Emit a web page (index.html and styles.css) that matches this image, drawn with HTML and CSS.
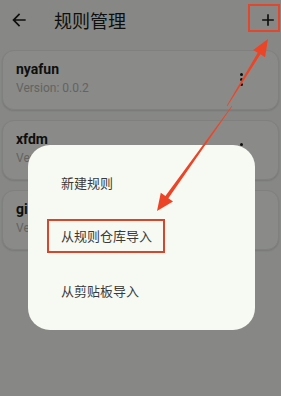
FILE: index.html
```html
<!DOCTYPE html>
<html>
  <head>
    <meta charset="UTF-8" />
    <title>规则管理</title>
    <link rel="stylesheet" href="styles.css">
  </head>
  <body>
    <div class="topbar">
      <svg class="back" viewBox="0 0 24 24"><path d="M20 11H7.83l5.59-5.59L12 4l-8 8 8 8 1.41-1.41L7.83 13H20v-2z"/></svg>
      <h1>规则管理</h1>
      <span class="spacer"></span>
      <svg class="add" viewBox="0 0 24 24"><path d="M19 13h-6v6h-2v-6H5v-2h6V5h2v6h6v2z"/></svg>
    </div>

    <div class="rules">
      <div class="rule-card">
        <div class="rule-info">
          <div class="rule-name">nyafun</div>
          <div class="rule-version">Version: 0.0.2</div>
        </div>
        <div class="more"><i></i><i></i><i></i></div>
      </div>
      <div class="rule-card">
        <div class="rule-info">
          <div class="rule-name">xfdm</div>
          <div class="rule-version">Version: 0.0.1</div>
        </div>
        <div class="more"><i></i><i></i><i></i></div>
      </div>
      <div class="rule-card">
        <div class="rule-info">
          <div class="rule-name">girigirilove</div>
          <div class="rule-version">Version: 0.0.1</div>
        </div>
        <div class="more"><i></i><i></i><i></i></div>
      </div>
    </div>

    <div class="scrim">
      <div class="dialog">
        <div class="dialog-item">新建规则</div>
        <div class="dialog-item"><span class="mark">从规则仓库导入</span></div>
        <div class="dialog-item">从剪贴板导入</div>
      </div>
    </div>

    <!-- annotations drawn over the screenshot -->
    <svg class="notes" viewBox="0 0 281 396">
      <rect x="249" y="5" width="30" height="26" fill="none" stroke="#e0472c" stroke-width="2"/>
      <polygon fill="#ec4427" points="268,39 265.1,57.2 260.5,54.3 227.3,106.2 226.7,105.8 257.7,52.7 253.1,49.9"/>
      <polygon fill="#ec4427" points="157,211 173,201.6 168.4,198.2 232.2,106.2 231.8,105.8 165.4,196.1 160.8,192.8"/>
    </svg>
  </body>
</html>
```

FILE: styles.css
```css
* {
  margin: 0;
  padding: 0;
  box-sizing: border-box;
}
body {
  font-family: Roboto, "Noto Sans CJK SC", sans-serif;
  background: #f6f8f3;
  color: #1a1c19;
  width: 281px;
  height: 396px;
  overflow: hidden;
}
.topbar {
  display: flex;
  align-items: center;
  height: 40px;
  padding: 0 3px 0 9px;
}
.back {
  width: 20px;
  height: 20px;
  fill: #1a1c19;
}
h1 {
  margin-left: 25px;
  font-size: 18px;
  font-weight: 400;
  font-family: "Noto Sans CJK SC", sans-serif;
}
.spacer {
  flex: 1;
}
.add {
  width: 20px;
  height: 20px;
  fill: #1a1c19;
}

.rules {
  display: flex;
  flex-direction: column;
  gap: 10px;
  padding: 10px 2px 0 2px;
}
.rule-card {
  display: flex;
  align-items: center;
  height: 60px;
  padding: 0 35px 0 13px;
  border-radius: 12px;
  background: #fbfcf8;
  border: 1px solid #e9ebe5;
  box-shadow: 0 1px 2px rgba(0, 0, 0, 0.12);
}
.rule-info {
  flex: 1;
  padding-bottom: 4px;
}
.rule-name {
  font-size: 14px;
  font-weight: 700;
  line-height: 18px;
}
.rule-version {
  font-size: 12px;
  line-height: 16px;
  margin-top: 2px;
  color: #b4b6b1;
}
.more {
  display: flex;
  flex-direction: column;
  gap: 2px;
  margin-bottom: 2px;
}
.more i {
  width: 3px;
  height: 3px;
  border-radius: 50%;
  background: #1a1c19;
}

.scrim {
  position: fixed;
  inset: 0;
  background: rgba(0, 0, 0, 0.45);
  display: flex;
  align-items: flex-start;
  padding: 145px 0 0 28px;
}
.dialog {
  width: 227px;
  height: 185px;
  padding: 10px 0 13px 0;
  border-radius: 22px;
  background: #f7f9f3;
  font-family: "Noto Sans CJK SC", sans-serif;
  font-size: 13px;
  color: #3a3b39;
}
.dialog-item {
  display: flex;
  align-items: center;
  height: 54px;
  padding-left: 33px;
}
.mark {
  display: inline-block;
  margin-left: -14px;
  padding: 0 11px 0 12px;
  line-height: 30px;
  border: 2px solid #d9452b;
}

.notes {
  position: fixed;
  left: 0;
  top: 0;
  width: 281px;
  height: 396px;
  pointer-events: none;
}
```
